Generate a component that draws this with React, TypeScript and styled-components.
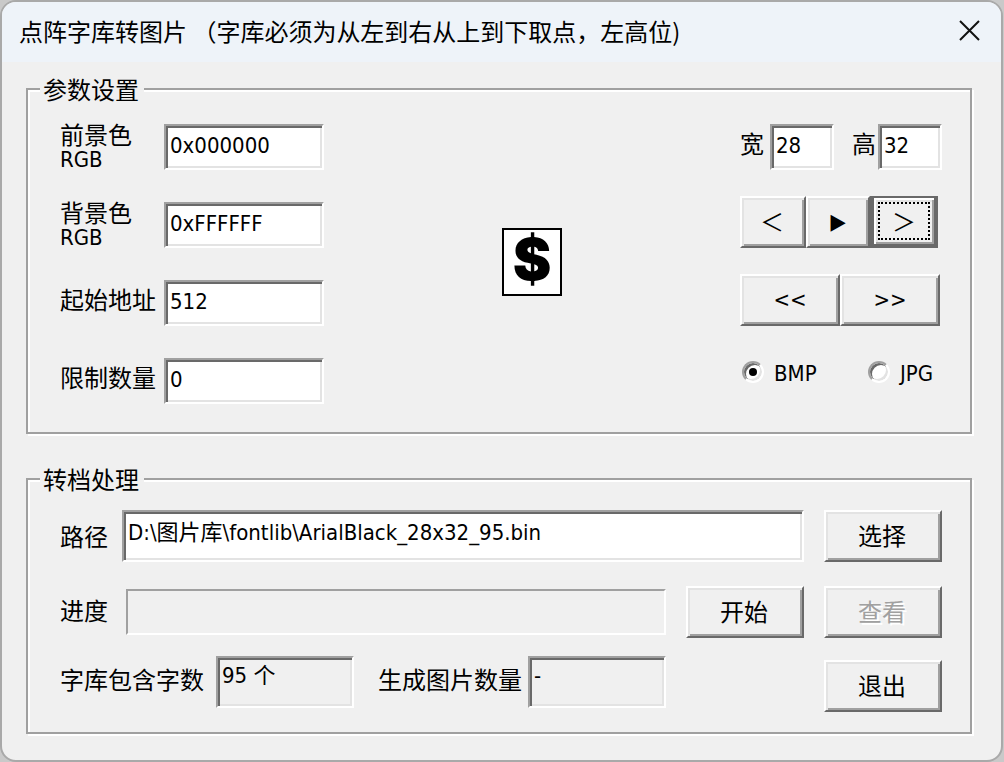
import React, { useState } from 'react';
import styled, { createGlobalStyle, css } from 'styled-components';

const latin = '"DejaVu Sans Condensed", "Noto Sans", "Noto Sans CJK SC", sans-serif';
const chinese = '"Noto Sans CJK SC", sans-serif';

const GlobalStyle = createGlobalStyle`
  * { box-sizing: border-box; }
  body {
    margin: 0;
    background: #c9c9c9;
    color: #000;
    font-family: ${chinese};
    font-size: 24px;
    line-height: 28px;
  }
  button, input, output { font: inherit; color: inherit; }
`;

const Dialog = styled.main`
  min-height: 100vh;
  margin-right: 1px;
  background: #f0f0f0;
  border: 2px solid #a9a9a9;
  border-radius: 16px;
  overflow: hidden;
`;

const TitleBar = styled.header`
  display: flex;
  align-items: center;
  justify-content: space-between;
  height: 60px;
  padding: 0 20px 2px 17px;
  background: #eef3f9;
`;

const Title = styled.h1`
  margin: 0;
  font-size: 24px;
  font-weight: 400;
  line-height: 28px;
  white-space: pre;
`;

const CloseButton = styled.button`
  display: flex;
  padding: 0;
  border: 0;
  background: none;
`;

const Body = styled.form`
  display: flex;
  flex-direction: column;
  gap: 31px;
  padding: 13px 29px 24px 24px;
`;

const Group = styled.fieldset<{ $top: number; $bottom: number }>`
  min-width: 0;
  margin: 0;
  padding: ${(p) => `${p.$top}px 28px ${p.$bottom}px 32px`};
  border: 2px solid #a0a0a0;
  box-shadow: 2px 2px 0 #fff, inset 2px 2px 0 #fff;
`;

const Legend = styled.legend`
  margin-left: -20px;
  padding: 0 5px 0 3px;
  background: #f0f0f0;
`;

const Settings = styled.div`
  display: grid;
  grid-template-columns: 264px 1fr 202px;
`;

const FieldList = styled.div`
  display: flex;
  flex-direction: column;
  gap: 32px;
`;

const Field = styled.div`
  display: grid;
  grid-template-columns: 104px 1fr;
  height: 46px;
`;

const FieldLabel = styled.label`
  align-self: center;
  padding-bottom: 8px;
  white-space: nowrap;
`;

const ColorLabel = styled.label`
  display: flex;
  flex-direction: column;
  gap: 6px;
  align-self: start;
  line-height: 20px;
`;

const SubLabel = styled.span`
  font-family: ${latin};
  font-size: 22px;
`;

const sunken = css`
  border: 2px solid;
  border-color: #a0a0a0 #fff #fff #a0a0a0;
  border-radius: 0;
  box-shadow: inset 2px 2px 0 #696969, inset -2px -2px 0 #e3e3e3;
`;

const TextInput = styled.input`
  ${sunken}
  width: 100%;
  min-width: 0;
  height: 46px;
  padding: 0 4px 4px;
  background: #fff;
  font-family: ${latin};
  font-size: 22px;
  outline: none;
`;

const PathInput = styled(TextInput)`
  height: 52px;
  padding-bottom: 12px;
`;

const CountOutput = styled.output`
  ${sunken}
  width: 138px;
  height: 52px;
  padding: 4px;
  font-family: ${latin};
  font-size: 22px;
`;

const PreviewArea = styled.div`
  display: flex;
  justify-content: center;
  padding-top: 104px;
`;

const GlyphPreview = styled.div`
  width: 60px;
  height: 68px;
  border: 2px solid #000;
  background: #fff;
  font-family: Inter, sans-serif;
  font-size: 58px;
  font-weight: 900;
  line-height: 58px;
  text-align: center;
`;

const Controls = styled.div`
  display: flex;
  flex-direction: column;
  gap: 26px;
`;

const SizeRow = styled.div`
  display: grid;
  grid-template-columns: 30px 64px 18px 26px 64px;
  height: 46px;

  label { padding-top: 5px; }
  #glyph-height { grid-column: 5; }
  label[for='glyph-height'] { grid-column: 4; }
`;

const ButtonRow = styled.div`
  display: flex;
`;

const Button = styled.button<{ $width: number; $latin?: boolean }>`
  width: ${(p) => p.$width}px;
  height: 52px;
  padding: 0 2px 2px 0;
  border: 2px solid;
  border-color: #fff #696969 #696969 #fff;
  border-radius: 0;
  background: #f0f0f0;
  box-shadow: inset 2px 2px 0 #e3e3e3, inset -2px -2px 0 #a0a0a0;
  white-space: nowrap;
  ${(p) => p.$latin && css`
    padding: 0;
    font-family: ${latin};
    font-size: 22px;
  `}

  &:disabled {
    color: #a0a0a0;
    text-shadow: 2px 2px 0 #fff;
  }
`;

const DefaultButton = styled(Button)`
  padding: 4px;
  border-width: 4px;
  border-top-width: 2px;
  border-color: #696969;
  box-shadow: inset 2px 2px 0 #fff, inset -2px -2px 0 #a0a0a0, inset 4px 4px 0 #e3e3e3;
  outline: none;
`;

const FocusFrame = styled.span`
  display: flex;
  align-items: center;
  justify-content: center;
  height: 100%;
  border: 2px dotted #000;
`;

const FormatRow = styled.div`
  display: grid;
  grid-template-columns: 126px 1fr;
  padding: 8px 0 0 2px;
`;

const FormatOption = styled.label`
  display: flex;
  align-items: center;
  gap: 10px;
  font-family: ${latin};
  font-size: 22px;
`;

const Radio = styled.input`
  appearance: none;
  display: grid;
  place-items: center;
  width: 22px;
  height: 22px;
  margin: 0 0 4px;
  border: 2px solid;
  border-color: #a0a0a0 #fff #fff #a0a0a0;
  border-radius: 50%;
  background: #fff;
  box-shadow: inset 2px 2px 0 #696969, inset -2px -2px 0 #e3e3e3;
  outline: none;

  &:checked::before {
    content: '';
    width: 8px;
    height: 8px;
    border-radius: 50%;
    background: #000;
  }
`;

const ProcessRow = styled.div`
  display: flex;
  align-items: center;
  gap: 20px;
  margin-bottom: 24px;
`;

const ProgressRow = styled(ProcessRow)`
  margin-bottom: 18px;
`;

const CountRow = styled.div`
  display: flex;
  align-items: flex-start;
  height: 56px;
`;

const Labelled = styled.div<{ $label: number }>`
  display: grid;
  grid-template-columns: ${(p) => p.$label}px 1fr;
  align-items: center;
  flex: 1;
  min-width: 0;
`;

const CountField = styled.div<{ $label: number }>`
  display: grid;
  grid-template-columns: ${(p) => p.$label}px 138px;
  align-items: center;
  margin-right: 24px;
  white-space: nowrap;

  label { padding-bottom: 6px; }
`;

const ProgressLabel = styled.span`
  padding-bottom: 4px;
`;

const ProgressTrack = styled.div`
  height: 46px;
  border: 2px solid;
  border-color: #a0a0a0 #fff #fff #a0a0a0;
`;

const ExitButton = styled(Button)`
  align-self: flex-end;
  margin-left: auto;
`;

export default function App() {
  const [format, setFormat] = useState('BMP');

  return (
    <>
      <GlobalStyle />
      <Dialog>
        <TitleBar>
          <Title>点阵字库转图片 （字库必须为从左到右从上到下取点，左高位)</Title>
          <CloseButton type="button" aria-label="关闭">
            <svg width="22" height="22" viewBox="0 0 22 22" fill="none" stroke="#111" strokeWidth="2">
              <path d="M1 1L20 20M20 1L1 20" />
            </svg>
          </CloseButton>
        </TitleBar>
        <Body onSubmit={(e) => e.preventDefault()}>
          <Group $top={21} $bottom={28}>
            <Legend>参数设置</Legend>
            <Settings>
              <FieldList>
                <Field>
                  <ColorLabel htmlFor="foreground">前景色<SubLabel>RGB</SubLabel></ColorLabel>
                  <TextInput id="foreground" defaultValue="0x000000" />
                </Field>
                <Field>
                  <ColorLabel htmlFor="background">背景色<SubLabel>RGB</SubLabel></ColorLabel>
                  <TextInput id="background" defaultValue="0xFFFFFF" />
                </Field>
                <Field>
                  <FieldLabel htmlFor="start">起始地址</FieldLabel>
                  <TextInput id="start" defaultValue="512" />
                </Field>
                <Field>
                  <FieldLabel htmlFor="limit">限制数量</FieldLabel>
                  <TextInput id="limit" defaultValue="0" />
                </Field>
              </FieldList>
              <PreviewArea>
                <GlyphPreview>$</GlyphPreview>
              </PreviewArea>
              <Controls>
                <SizeRow>
                  <label htmlFor="glyph-width">宽</label>
                  <TextInput id="glyph-width" defaultValue="28" />
                  <label htmlFor="glyph-height">高</label>
                  <TextInput id="glyph-height" defaultValue="32" />
                </SizeRow>
                <ButtonRow>
                  <Button type="button" $width={66}>＜</Button>
                  <Button type="button" $width={64} $latin>▶</Button>
                  <DefaultButton type="button" $width={68}><FocusFrame>＞</FocusFrame></DefaultButton>
                </ButtonRow>
                <ButtonRow>
                  <Button type="button" $width={100} $latin>&lt;&lt;</Button>
                  <Button type="button" $width={100} $latin>&gt;&gt;</Button>
                </ButtonRow>
                <FormatRow>
                  {['BMP', 'JPG'].map((name) => (
                    <FormatOption key={name}>
                      <Radio type="radio" name="format" checked={format === name} onChange={() => setFormat(name)} />
                      {name}
                    </FormatOption>
                  ))}
                </FormatRow>
              </Controls>
            </Settings>
          </Group>
          <Group $top={17} $bottom={20}>
            <Legend>转档处理</Legend>
            <ProcessRow>
              <Labelled $label={62}>
                <label htmlFor="path">路径</label>
                <PathInput id="path" defaultValue="D:\图片库\fontlib\ArialBlack_28x32_95.bin" />
              </Labelled>
              <Button type="button" $width={118}>选择</Button>
            </ProcessRow>
            <ProgressRow>
              <Labelled $label={66}>
                <ProgressLabel id="progress-label">进度</ProgressLabel>
                <ProgressTrack role="progressbar" aria-labelledby="progress-label" />
              </Labelled>
              <Button type="button" $width={118}>开始</Button>
              <Button type="button" $width={118} disabled>查看</Button>
            </ProgressRow>
            <CountRow>
              <CountField $label={156}>
                <label htmlFor="glyph-count">字库包含字数</label>
                <CountOutput id="glyph-count">95 个</CountOutput>
              </CountField>
              <CountField $label={150}>
                <label htmlFor="image-count">生成图片数量</label>
                <CountOutput id="image-count">-</CountOutput>
              </CountField>
              <ExitButton type="button" $width={118}>退出</ExitButton>
            </CountRow>
          </Group>
        </Body>
      </Dialog>
    </>
  );
}
